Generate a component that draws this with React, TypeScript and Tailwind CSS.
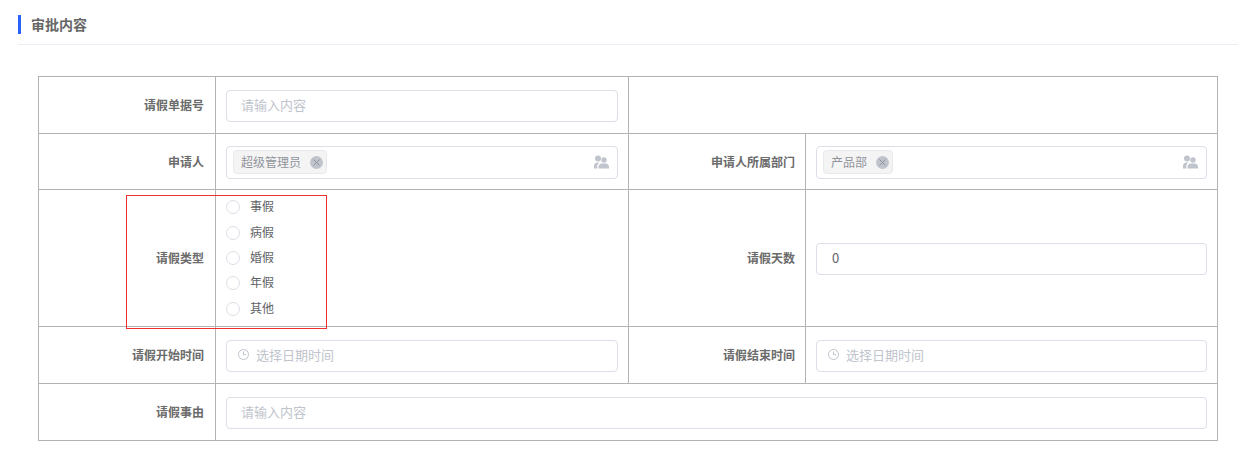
const font = '[font-family:"Noto_Sans_CJK_SC",sans-serif]'

function Label({ children, inner }: { children: React.ReactNode; inner?: boolean }) {
  return (
    <td className={`border border-[#b3b3b3] text-right align-middle text-[12px] font-bold text-[#6b6b6b] ${inner ? 'pr-[10px]' : 'pr-[11px]'}`}>
      {children}
    </td>
  )
}

function Field({ text, colSpan }: { text: string; colSpan?: number }) {
  return (
    <td colSpan={colSpan} className="border border-[#b3b3b3] px-[10px] pt-[1px] align-middle">
      <div className="flex h-[32px] items-center rounded-[4px] border border-[#dcdee8] pb-[2px] pl-[14px] text-[13px] text-[#c0c4cc]">{text}</div>
    </td>
  )
}

function UserField({ tag }: { tag: string }) {
  return (
    <td className="border border-[#b3b3b3] px-[10px] pt-[1px] align-middle">
      <div className="flex h-[33px] items-center justify-between rounded-[4px] border border-[#dcdee8] pl-[6px] pr-[8px]">
        <span className="flex h-[24px] items-center gap-[9px] rounded-[4px] border border-[#e9e9eb] bg-[#f4f4f5] pl-[7px] pr-[3px] text-[12px] text-[#909399]">
          {tag}
          <span className="flex h-[13px] w-[13px] items-center justify-center rounded-full bg-[#c0c4cc]">
            <svg width="9" height="9" viewBox="0 0 9 9" stroke="#909399" strokeWidth="1" fill="none">
              <path d="M1.5 1.5l6 6M7.5 1.5l-6 6" />
            </svg>
          </span>
        </span>
        <svg width="15" height="14" viewBox="0 0 15 14" fill="#c0c4cc">
          <circle cx="4" cy="3.5" r="3" />
          <path d="M0 13.5v-2.5c0-2 1.5-3.5 3.5-3.5h2c-1.300.8-2 2-2.200 3v3z" />
          <circle cx="10" cy="5" r="2.700" />
          <path d="M4.500 13.500v-1.500c0-2 1.500-3.500 3.500-3.500h3.500c2 0 3.500 1.500 3.500 3.500v1.500z" />
        </svg>
      </div>
    </td>
  )
}

function DateField() {
  return (
    <td className="border border-[#b3b3b3] px-[10px] pt-[1px] align-middle">
      <div className="flex h-[32px] items-center gap-[6px] rounded-[4px] border border-[#dcdee8] pb-[2px] pl-[10px] text-[13px] text-[#c0c4cc]">
        <svg width="13" height="13" viewBox="0 0 13 13" fill="none" stroke="#c0c4cc" strokeWidth="1">
          <circle cx="6.500" cy="6.500" r="5" />
          <path d="M6.500 3.500v3.200h2.500" />
        </svg>
        选择日期时间
      </div>
    </td>
  )
}

const leaveTypes = ['事假', '病假', '婚假', '年假', '其他']

export default function App() {
  return (
    <div className={`relative h-[452px] w-[1241px] overflow-hidden bg-white ${font}`}>
      <div className="ml-[18px] mr-[3px] h-[45px] border-b border-[#ebeef5] pt-[15px]">
        <h2 className="flex h-[19px] items-center border-l-[3px] border-[#2962ff] pl-[10px] text-[14px] font-bold text-[#666]">审批内容</h2>
      </div>
      <div className="ml-[38px] mt-[31px] w-[1179px]">
        <table className="w-full table-fixed border-collapse">
          <colgroup>
            <col className="w-[177px]" />
            <col className="w-[413px]" />
            <col className="w-[177px]" />
            <col className="w-[412px]" />
          </colgroup>
          <tbody>
            <tr className="h-[57px]">
              <Label>请假单据号</Label>
              <Field text="请输入内容" />
              <td colSpan={2} className="border border-[#b3b3b3]" />
            </tr>
            <tr className="h-[56px]">
              <Label>申请人</Label>
              <UserField tag="超级管理员" />
              <Label inner>申请人所属部门</Label>
              <UserField tag="产品部" />
            </tr>
            <tr className="h-[137px]">
              <Label>请假类型</Label>
              <td className="border border-[#b3b3b3] px-[10px] pb-[2px] align-middle">
                <div className="flex flex-col">
                  {leaveTypes.map((t) => (
                    <label key={t} className="flex h-[25.300px] items-center gap-[9px] text-[12px] text-[#606266]">
                      <span className="mr-[1px] h-[14px] w-[14px] translate-y-[1px] rounded-full border border-[#dcdfe6]" />
                      {t}
                    </label>
                  ))}
                </div>
              </td>
              <Label inner>请假天数</Label>
              <td className="border border-[#b3b3b3] px-[10px] pt-[1px] align-middle">
                <div className="flex h-[32px] items-center rounded-[4px] border border-[#dcdee8] pb-[2px] pl-[15px] text-[13px] text-[#606266]">0</div>
              </td>
            </tr>
            <tr className="h-[57px]">
              <Label>请假开始时间</Label>
              <DateField />
              <Label inner>请假结束时间</Label>
              <DateField />
            </tr>
            <tr className="h-[57px]">
              <Label>请假事由</Label>
              <Field text="请输入内容" colSpan={3} />
            </tr>
          </tbody>
        </table>
      </div>
      <div className="pointer-events-none absolute left-[126px] top-[195px] h-[134px] w-[201px] border border-[#f03030]" />
    </div>
  )
}
